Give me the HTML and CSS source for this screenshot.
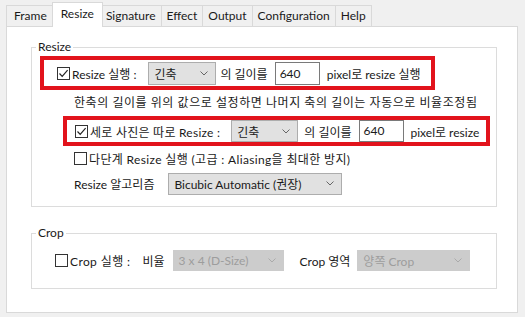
FILE: index.html
```html
<!DOCTYPE html>
<html lang="ko">
<head>
    <meta charset="UTF-8">
    <meta name="viewport" content="width=device-width, initial-scale=1.0">
    <link rel="stylesheet" href="styles.css">
    <title>Resize</title>
</head>
<body>
    <div class="window">
        <div class="tabs">
            <div class="tab">Frame</div>
            <div class="tab active">Resize</div>
            <div class="tab">Signature</div>
            <div class="tab">Effect</div>
            <div class="tab">Output</div>
            <div class="tab">Configuration</div>
            <div class="tab">Help</div>
        </div>
        <div class="panel">
            <fieldset class="group group-resize">
                <legend>Resize</legend>
                <div class="mark mark-main">
                    <span class="box"><svg width="11" height="11" viewBox="0 0 11 11"><polyline points="1.5,5.5 4.2,8.3 9.6,2.2" fill="none" stroke="#222" stroke-width="1.2"/></svg></span>
                    <span class="label">Resize 실행 :</span>
                    <div class="select sel-axis">긴축<svg class="chev" width="8" height="5" viewBox="0 0 8 5"><polyline points="0.5,0.5 4,4 7.5,0.5" fill="none" stroke="#666" stroke-width="1"/></svg></div>
                    <span class="after-select">의 길이를</span>
                    <div class="input">640</div>
                    <span class="after-input">pixel로 resize 실행</span>
                </div>
                <div class="row note">한축의 길이를 위의 값으로 설정하면 나머지 축의 길이는 자동으로 비율조정됨</div>
                <div class="mark mark-sub">
                    <span class="box"><svg width="11" height="11" viewBox="0 0 11 11"><polyline points="1.5,5.5 4.2,8.3 9.6,2.2" fill="none" stroke="#222" stroke-width="1.2"/></svg></span>
                    <span class="label">세로 사진은 따로 Resize :</span>
                    <div class="select sel-axis sel-sub">긴축<svg class="chev" width="8" height="5" viewBox="0 0 8 5"><polyline points="0.5,0.5 4,4 7.5,0.5" fill="none" stroke="#666" stroke-width="1"/></svg></div>
                    <span class="after-select">의 길이를</span>
                    <div class="input input-sub">640</div>
                    <span class="after-input">pixel로 resize</span>
                </div>
                <div class="row multi">
                    <span class="box"></span>
                    <span class="label">다단계 Resize 실행 (고급 : Aliasing을 최대한 방지)</span>
                </div>
                <div class="row algo">
                    <span>Resize 알고리즘</span>
                    <div class="select sel-algo">Bicubic Automatic (권장)<svg class="chev" width="8" height="5" viewBox="0 0 8 5"><polyline points="0.5,0.5 4,4 7.5,0.5" fill="none" stroke="#666" stroke-width="1"/></svg></div>
                </div>
            </fieldset>

            <fieldset class="group group-crop">
                <legend>Crop</legend>
                <div class="row crop">
                    <span class="box"></span>
                    <span class="label">Crop 실행 :</span>
                    <span class="ratio">비율</span>
                    <div class="select disabled sel-ratio">3 x 4 (D-Size)<svg class="chev" width="8" height="5" viewBox="0 0 8 5"><polyline points="0.5,0.5 4,4 7.5,0.5" fill="none" stroke="#aaa" stroke-width="1"/></svg></div>
                    <span class="area">Crop 영역</span>
                    <div class="select disabled sel-area">양쪽 Crop<svg class="chev" width="8" height="5" viewBox="0 0 8 5"><polyline points="0.5,0.5 4,4 7.5,0.5" fill="none" stroke="#aaa" stroke-width="1"/></svg></div>
                </div>
            </fieldset>
        </div>
    </div>
</body>
</html>
```

FILE: styles.css
```css
body {
    margin: 0;
    background-color: #f0f0f0;
    font-family: Lato, "Noto Sans CJK KR", sans-serif;
    font-size: 12px;
    color: #1a1a1a;
}

.window {
    padding: 5px 0 0 6px;
}

/* tab strip */
.tabs {
    display: flex;
    align-items: flex-end;
    height: 21px;
}

.tab {
    height: 21px;
    line-height: 20px;
    padding: 0 5px;
    box-sizing: border-box;
    border: 1px solid #d9d9d9;
    border-bottom: none;
    margin-left: -1px;
    background-color: #f0f0f0;
}

.tab:first-child {
    margin-left: 0;
    padding: 0 7px;
}

.tab.active {
    height: 25px;
    line-height: 22px;
    margin: 0 -2px -1px -3px;
    padding: 0 8px;
    background-color: #fff;
    position: relative;
    z-index: 1;
}

.panel {
    width: 512px;
    height: 287px;
    box-sizing: border-box;
    border: 1px solid #d9d9d9;
    background-color: #fff;
    padding: 12px 0 0 24px;
}

/* group boxes */
.group {
    width: 466px;
    box-sizing: border-box;
    margin: 0;
    border: 1px solid #dcdcdc;
    padding: 0 0 11px 0;
}

.group legend {
    margin-left: 4px;
    padding: 0 2px;
    line-height: 16px;
}

.group-crop {
    margin-top: 18px;
    padding-bottom: 16px;
}

.row {
    display: flex;
    align-items: center;
}

/* red highlight boxes */
.mark {
    display: flex;
    align-items: center;
    box-sizing: border-box;
    border: 4px solid #e2131c;
}

.mark-main {
    margin: 1px 0 0 8px;
    width: 395px;
    height: 34px;
    padding-left: 13px;
}

.mark-sub {
    margin: 6px 0 0 31px;
    width: 427px;
    height: 30px;
    padding-left: 8px;
}

.mark-sub .label {
    letter-spacing: 0.25px;
}

.mark-sub .after-select {
    margin-left: 6px;
}

.note {
    height: 18px;
    margin-top: 2px;
    padding-left: 42px;
    letter-spacing: 0.55px;
}

.multi {
    height: 17px;
    margin-top: 4px;
    padding-left: 42px;
}

.multi .label {
    letter-spacing: 0.35px;
}

.algo {
    height: 23px;
    margin-top: 5px;
    padding-left: 42px;
}

.crop {
    height: 23px;
    margin-top: 8px;
    padding-left: 23px;
}

.crop .label {
    letter-spacing: 0.4px;
}

/* checkbox */
.box {
    width: 13px;
    height: 13px;
    box-sizing: border-box;
    border: 1px solid #333;
    background-color: #fff;
    display: flex;
    align-items: center;
    justify-content: center;
    flex-shrink: 0;
}

.label {
    margin-left: 2px;
}

/* combo boxes */
.select {
    display: flex;
    align-items: center;
    justify-content: space-between;
    box-sizing: border-box;
    height: 23px;
    padding: 0 7px 0 5px;
    background-color: #e1e1e1;
    border: 1px solid #adadad;
}

.sel-axis {
    width: 68px;
    margin-left: 12px;
}

.sel-sub {
    width: 67px;
    height: 22px;
    margin-left: 11px;
}

.sel-algo {
    width: 174px;
    height: 22px;
    margin-left: 14px;
}

.select.disabled {
    background-color: #cccccc;
    border-color: #cccccc;
    color: #9d9d9d;
    height: 21px;
}

.sel-ratio {
    width: 111px;
    margin-left: 8px;
}

.sel-area {
    width: 113px;
    margin-left: 7px;
}

.ratio {
    margin-left: 12px;
}

.area {
    margin-left: 16px;
}

.chev {
    flex-shrink: 0;
}

.after-select {
    margin-left: 4px;
}

/* text fields */
.input {
    box-sizing: border-box;
    width: 45px;
    height: 23px;
    line-height: 21px;
    padding-left: 4px;
    margin-left: 7px;
    border: 1px solid #7a7a7a;
    background-color: #fff;
}

.input-sub {
    height: 22px;
    line-height: 20px;
}

.after-input {
    margin-left: 7px;
}
```
